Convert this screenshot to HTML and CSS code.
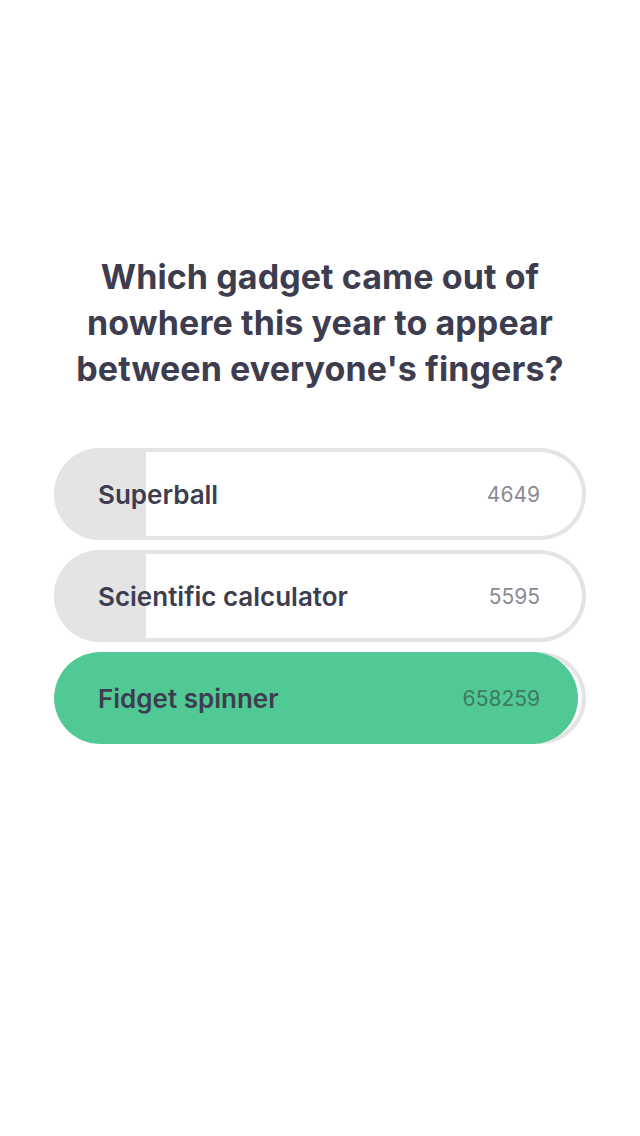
FILE: index.html
```html
<!DOCTYPE html>
<html lang="en">
<head>
<meta charset="utf-8">
<title>Poll</title>
<link rel="stylesheet" href="styles.css">
</head>
<body>
<main class="poll">
  <h1 class="question">Which gadget came out of nowhere this year to appear between everyone's fingers?</h1>
  <ul class="options">
    <li class="option">
      <span class="fill" style="width: 17.3%"></span>
      <span class="label">Superball</span>
      <span class="count">4649</span>
    </li>
    <li class="option">
      <span class="fill" style="width: 17.3%"></span>
      <span class="label">Scientific calculator</span>
      <span class="count">5595</span>
    </li>
    <li class="option option-winner">
      <span class="fill fill-winner" style="width: 98.5%"></span>
      <span class="label">Fidget spinner</span>
      <span class="count">658259</span>
    </li>
  </ul>
</main>
</body>
</html>
```

FILE: styles.css
```css
* { box-sizing: border-box; }
html, body { margin: 0; padding: 0; background: #ffffff; }
body {
  font-family: Inter, "Open Sans", "Liberation Sans", sans-serif;
  color: #3d3d4f;
  width: 640px;
  height: 1136px;
}
.poll {
  padding: 254px 54px 0;
  display: flex;
  flex-direction: column;
  gap: 56px;
}
.question {
  margin: 0 -20px;
  font-size: 34px;
  line-height: 46px;
  font-weight: 700;
  letter-spacing: 0.1px;
  text-align: center;
  color: #3d3d4f;
}
.options {
  list-style: none;
  margin: 0;
  padding: 0;
  display: flex;
  flex-direction: column;
  gap: 10px;
}
.option {
  position: relative;
  height: 92px;
  border-radius: 46px;
  box-shadow: inset 0 0 0 4px #e4e4e4;
  overflow: hidden;
  display: flex;
  align-items: center;
  justify-content: space-between;
  padding: 0 46px 0 44px;
}
.fill {
  position: absolute;
  left: 0;
  top: 0;
  bottom: 0;
  background: #e4e4e4;
}
.fill-winner {
  background: #51c994;
  border-radius: 46px;
}
.label {
  position: relative;
  font-size: 26px;
  font-weight: 600;
  color: #3d3d4f;
}
.count {
  position: relative;
  font-size: 21px;
  font-weight: 400;
  color: #8a8a96;
}
.option-winner .count {
  color: #3f7a62;
}
```
